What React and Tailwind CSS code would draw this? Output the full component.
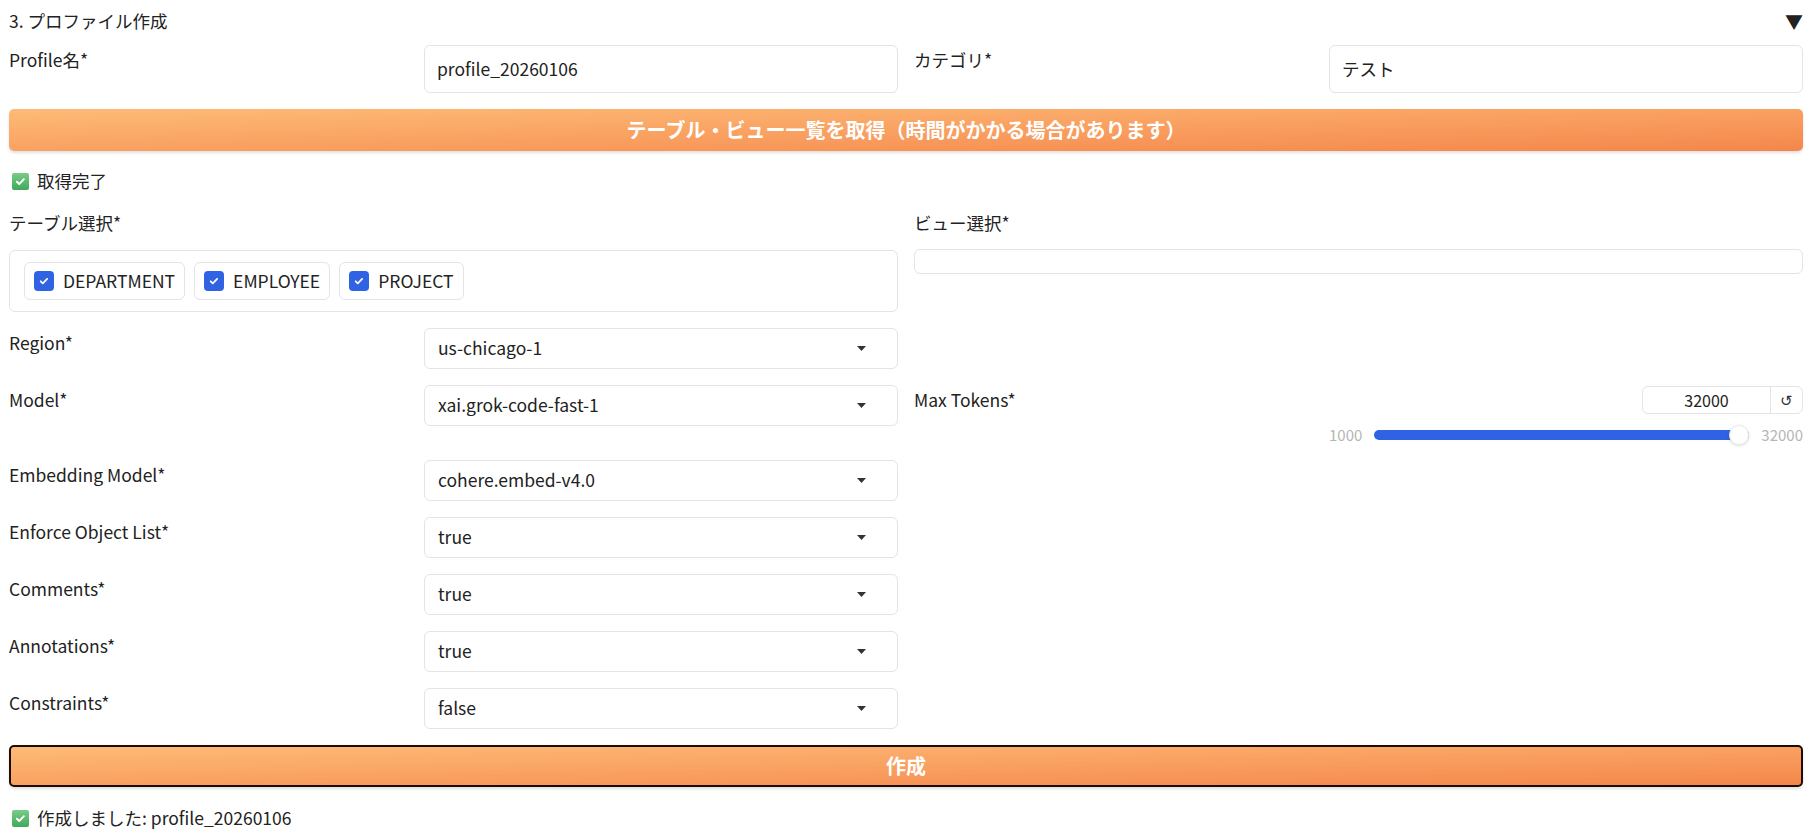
import React from "react";

function Check({ className = "" }) {
  return (
    <svg viewBox="0 0 16 16" className={className} fill="none">
      <path d="M4.2 8.3l2.4 2.4 5-5.2" stroke="white" strokeWidth="2" strokeLinecap="round" strokeLinejoin="round" />
    </svg>
  );
}

function GreenCheck() {
  return (
    <span className="inline-flex h-[17px] w-[17px] items-center justify-center rounded-[2px] bg-gradient-to-b from-[#78cc89] to-[#3fa95a]">
      <Check className="h-[15px] w-[15px]" />
    </span>
  );
}

function Label({ children }) {
  return <div className="pt-[2px] text-[17.5px] leading-[26px] text-[#222]">{children}</div>;
}

function TextInput({ value }) {
  return (
    <div className="flex h-[48px] w-[474px] shrink-0 items-center rounded-[6px] border border-[#e4e4e7] bg-white px-[12px] text-[17.5px] text-[#222]">
      {value}
    </div>
  );
}

function Select({ value }) {
  return (
    <div className="flex h-[41px] w-[474px] shrink-0 items-center justify-between rounded-[6px] border border-[#e4e4e7] bg-white pl-[13px] pr-[31px] text-[17.5px] text-[#222]">
      <span>{value}</span>
      <svg width="9" height="5" viewBox="0 0 9 5">
        <path d="M0 0h9L4.5 5z" fill="#333" />
      </svg>
    </div>
  );
}

function Field({ label, children }) {
  return (
    <div className="flex gap-4">
      <div className="flex-1">
        <Label>{label}</Label>
      </div>
      {children}
    </div>
  );
}

function Chip({ label }) {
  return (
    <div className="flex h-[38px] items-center gap-[9px] rounded-[6px] border border-[#e4e4e7] bg-white px-[9px] text-[17.5px] text-[#222]">
      <span className="flex h-[20px] w-[20px] items-center justify-center rounded-[4px] bg-[#2f63e4]">
        <Check className="h-[14px] w-[14px]" />
      </span>
      <span>{label}</span>
    </div>
  );
}

function OrangeButton({ children, focused }) {
  return (
    <div
      className={
        "flex h-[42px] w-full items-center justify-center rounded-[5px] bg-gradient-to-br from-[#fdbb77] to-[#f4864b] text-[20px] font-bold text-white shadow-[0_2px_3px_rgba(0,0,0,0.12)] " +
        (focused ? "border-2 border-[#1c0c04]" : "")
      }
    >
      {children}
    </div>
  );
}

export default function App() {
  return (
    <div className="min-h-[837px] w-[1810px] bg-white pl-[9px] pr-[7px] pt-[8px] font-['Noto_Sans_CJK_JP','Noto_Sans',sans-serif] text-[#222]">
      <div className="flex h-[26px] items-center justify-between text-[17.5px]">
        <span>3. プロファイル作成</span>
        <span className="text-[18px] leading-none text-[#222]">▼</span>
      </div>

      <div className="mt-[11px] grid grid-cols-2 gap-4">
        <Field label="Profile名*">
          <TextInput value="profile_20260106" />
        </Field>
        <Field label="カテゴリ*">
          <TextInput value="テスト" />
        </Field>
      </div>

      <div className="mt-[16px]">
        <OrangeButton>テーブル・ビュー一覧を取得（時間がかかる場合があります）</OrangeButton>
      </div>

      <div className="mt-[17px] flex h-[26px] items-center gap-[8px] pl-[3px] text-[17.5px]">
        <GreenCheck />
        <span>取得完了</span>
      </div>

      <div className="mt-[16px] grid grid-cols-2 gap-4">
        <div>
          <div className="text-[17.5px] leading-[26px]">テーブル選択*</div>
          <div className="mt-[14px] flex h-[62px] items-center gap-[9px] rounded-[6px] border border-[#e4e4e7] px-[14px]">
            <Chip label="DEPARTMENT" />
            <Chip label="EMPLOYEE" />
            <Chip label="PROJECT" />
          </div>
        </div>
        <div>
          <div className="text-[17.5px] leading-[26px]">ビュー選択*</div>
          <div className="mt-[13px] h-[25px] rounded-[6px] border border-[#e4e4e7]" />
        </div>
      </div>

      <div className="mt-[16px] grid grid-cols-2 gap-4">
        <Field label="Region*">
          <Select value="us-chicago-1" />
        </Field>
        <div />
      </div>

      <div className="mt-[16px] grid grid-cols-2 gap-4">
        <div className="self-start">
          <Field label="Model*">
            <Select value="xai.grok-code-fast-1" />
          </Field>
        </div>
        <div className="flex gap-4">
          <div className="flex-1">
            <Label>Max Tokens*</Label>
          </div>
          <div className="w-[474px] shrink-0">
            <div className="flex justify-end pt-[1px]">
              <div className="flex h-[28px] rounded-[6px] border border-[#e4e4e7]">
                <div className="flex w-[127px] items-center justify-center text-[16px] text-[#222]">32000</div>
                <div className="flex w-[32px] items-center justify-center border-l border-[#e4e4e7] text-[15px] text-[#333]">↺</div>
              </div>
            </div>
            <div className="mt-[11px] flex h-[20px] items-center gap-[12px] text-[15px] text-[#b5b5b5]">
              <span>1000</span>
              <div className="relative h-[10px] flex-1 rounded-full bg-[#2f63e4]">
                <div className="absolute right-0 top-1/2 h-[20px] w-[20px] -translate-y-1/2 rounded-full border border-[#ececec] bg-white shadow-[0_1px_3px_rgba(0,0,0,0.15)]" />
              </div>
              <span>32000</span>
            </div>
          </div>
        </div>
      </div>

      <div className="mt-[15px] grid grid-cols-2 gap-4">
        <Field label="Embedding Model*">
          <Select value="cohere.embed-v4.0" />
        </Field>
        <div />
      </div>

      <div className="mt-[16px] grid grid-cols-2 gap-4">
        <Field label="Enforce Object List*">
          <Select value="true" />
        </Field>
        <div />
      </div>

      <div className="mt-[16px] grid grid-cols-2 gap-4">
        <Field label="Comments*">
          <Select value="true" />
        </Field>
        <div />
      </div>

      <div className="mt-[16px] grid grid-cols-2 gap-4">
        <Field label="Annotations*">
          <Select value="true" />
        </Field>
        <div />
      </div>

      <div className="mt-[16px] grid grid-cols-2 gap-4">
        <Field label="Constraints*">
          <Select value="false" />
        </Field>
        <div />
      </div>

      <div className="mt-[16px]">
        <OrangeButton focused>作成</OrangeButton>
      </div>

      <div className="mt-[18px] flex h-[26px] items-center gap-[8px] pl-[3px] text-[17.5px]">
        <GreenCheck />
        <span>作成しました: profile_20260106</span>
      </div>
    </div>
  );
}
